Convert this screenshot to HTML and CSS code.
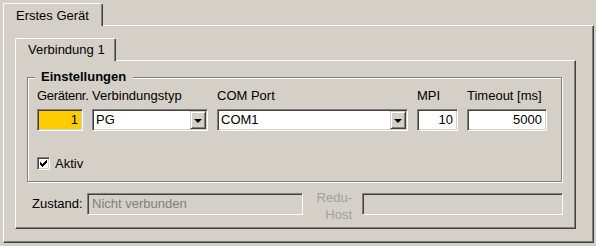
FILE: index.html
```html
<!DOCTYPE html>
<html lang="de">
<head>
<meta charset="utf-8">
<title>Erstes Gerät</title>
<link rel="stylesheet" href="styles.css">
</head>
<body>
<div class="tabctl outer">
  <div class="tabs"><div class="tab tab-outer">Erstes Gerät</div></div>
  <div class="panel panel-outer">
    <div class="tabctl inner">
      <div class="tabs"><div class="tab tab-inner">Verbindung 1</div></div>
      <div class="panel panel-inner">
        <div class="group">
          <span class="legend">Einstellungen</span>
          <div class="fields">
            <div class="col col-nr">
              <span class="lbl lbl-nr">Gerätenr.</span>
              <div class="sunken edit edit-yellow">1</div>
            </div>
            <div class="col col-typ">
              <span class="lbl">Verbindungstyp</span>
              <div class="sunken combo"><span class="combo-text">PG</span><span class="drop"><span class="arrow"></span></span></div>
            </div>
            <div class="col col-com">
              <span class="lbl">COM Port</span>
              <div class="sunken combo"><span class="combo-text">COM1</span><span class="drop"><span class="arrow"></span></span></div>
            </div>
            <div class="col col-mpi">
              <span class="lbl">MPI</span>
              <div class="sunken edit">10</div>
            </div>
            <div class="col col-timeout">
              <span class="lbl">Timeout [ms]</span>
              <div class="sunken edit">5000</div>
            </div>
          </div>
          <div class="check">
            <span class="sunken box"><svg width="9" height="9" viewBox="0 0 9 9" shape-rendering="crispEdges"><path d="M7 1h1v1h-1zM6 2h2v1h-2zM1 3h1v1h-1zM5 3h3v1h-3zM1 4h2v1h-2zM4 4h3v1h-3zM1 5h5v1h-5zM2 6h3v1h-3zM3 7h1v1h-1z" fill="#000"/></svg></span>
            <span class="check-label">Aktiv</span>
          </div>
        </div>
        <div class="status-row">
          <span class="status-label">Zustand:</span>
          <div class="sunken disabled field-state">Nicht verbunden</div>
          <span class="redu-label">Redu-<br>Host</span>
          <div class="sunken disabled field-host"></div>
        </div>
      </div>
    </div>
  </div>
</div>
</body>
</html>
```
FILE: styles.css
```css
* { box-sizing: border-box; }
html, body { margin: 0; }
body {
  width: 596px;
  height: 246px;
  overflow: hidden;
  background: #d4d0c8;
  color: #000;
  font: 13px/16px "Liberation Sans", Arial, sans-serif;
}

.outer { padding: 3px 2px 0 3px; }

.tabs { display: flex; }

.tab {
  position: relative;
  z-index: 1;
  height: 23px;
  margin-bottom: -1px;
  background: #d4d0c8;
  border-left: 1px solid #fff;
  border-top: 1px solid #fff;
  border-right: 1px solid #404040;
  border-radius: 2px 2px 0 0;
  box-shadow: inset -1px 0 0 #808080;
  white-space: nowrap;
}
.tab-outer { width: 100px; padding: 4px 0 0 12px; }
.tab-inner { width: 101px; padding: 3px 0 0 12px; }

.panel {
  background: #d4d0c8;
  border-left: 1px solid #fff;
  border-top: 1px solid #fff;
  border-right: 1px solid #404040;
  border-bottom: 1px solid #404040;
  box-shadow: inset -1px -1px 0 #808080;
}
.panel-outer {
  width: 591px;
  height: 218px;
  padding: 12px 0 0 11px;
}
.panel-inner {
  width: 561px;
  height: 169px;
  padding: 16px 0 0 11px;
}

.group {
  position: relative;
  width: 535px;
  height: 105px;
  padding: 10px 0 0 9px;
  border: 1px solid #808080;
  box-shadow: 1px 1px 0 #fff, inset 1px 1px 0 #fff;
}
.legend {
  position: absolute;
  top: -9px;
  left: 7px;
  padding: 0 7px 0 6px;
  background: #d4d0c8;
  font-weight: bold;
}

.fields { display: flex; column-gap: 9px; }
.col { display: flex; flex-direction: column; }
.col-nr { width: 46px; }
.col-typ { width: 116px; }
.col-com { width: 191px; }
.col-mpi { width: 41px; }
.col-timeout { width: 80px; }
.lbl { white-space: nowrap; margin-bottom: 5px; }
.lbl-nr { letter-spacing: -0.3px; }

.sunken {
  border: 1px solid;
  border-color: #808080 #fff #fff #808080;
  box-shadow: inset 1px 1px 0 #404040, inset -1px -1px 0 #d4d0c8;
}

.edit {
  height: 22px;
  padding: 2px 4px 0 3px;
  background: #fff;
  text-align: right;
}
.edit-yellow { background: #ffcc00; }

.combo {
  display: flex;
  height: 22px;
  background: #fff;
}
.combo-text { flex: 1; padding: 2px 0 0 3px; }
.drop {
  display: flex;
  align-items: center;
  justify-content: center;
  width: 16px;
  height: 18px;
  margin: 1px 1px 0 0;
  background: #d4d0c8;
  border: 1px solid;
  border-color: #d4d0c8 #404040 #404040 #d4d0c8;
  box-shadow: inset 1px 1px 0 #fff, inset -1px -1px 0 #808080;
}
.arrow {
  width: 0;
  height: 0;
  border-left: 4px solid transparent;
  border-right: 4px solid transparent;
  border-top: 4px solid #000;
  margin-top: 1px;
}

.check {
  display: flex;
  align-items: center;
  margin-top: 26px;
  height: 13px;
}
.box {
  display: flex;
  align-items: center;
  justify-content: center;
  width: 13px;
  height: 13px;
  background: #fff;
}
.box svg { display: block; }
.check-label { margin-left: 5px; }

.status-row {
  display: flex;
  align-items: center;
  margin-top: 11px;
  padding-left: 5px;
  height: 22px;
}
.status-label { width: 55px; }
.disabled {
  height: 22px;
  padding: 2px 3px 0 4px;
  background: #d4d0c8;
  color: #808080;
}
.field-state { width: 216px; }
.redu-label {
  width: 49px;
  margin-right: 10px;
  text-align: right;
  line-height: 17px;
  color: #a0a0a0;
  margin-top: 3px;
}
.field-host { width: 201px; }
```
